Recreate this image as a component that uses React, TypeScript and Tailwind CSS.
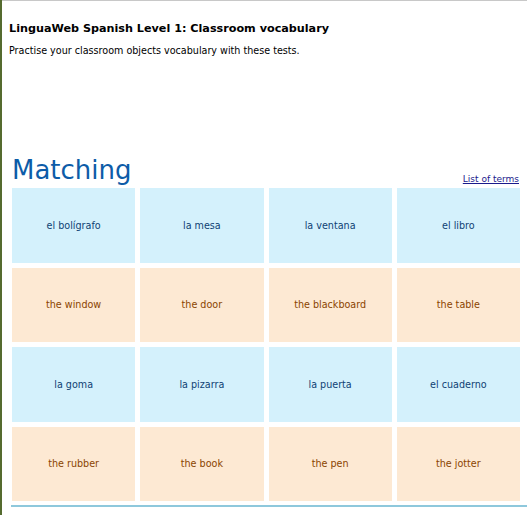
const rows = [
  { kind: "es", words: ["el bolígrafo", "la mesa", "la ventana", "el libro"] },
  { kind: "en", words: ["the window", "the door", "the blackboard", "the table"] },
  { kind: "es", words: ["la goma", "la pizarra", "la puerta", "el cuaderno"] },
  { kind: "en", words: ["the rubber", "the book", "the pen", "the jotter"] },
];

export default function App() {
  return (
    <div className="h-[515px] w-[527px] border-l-2 border-[#556b2f] bg-white font-['DejaVu_Sans',sans-serif] text-black">
      <div className="flex h-full flex-col border-t border-[#c8c8c8]">
        <div className="pl-[7px] pt-[21px]">
          <h1 className="text-[11.2px] font-bold leading-[14px]">LinguaWeb Spanish Level 1: Classroom vocabulary</h1>
          <p className="mt-[8px] text-[9.6px] leading-[13px]">Practise your classroom objects vocabulary with these tests.</p>
        </div>

        <div className="mt-[100px] flex items-end justify-between pl-[10px] pr-[8px]">
          <h2 className="text-[26px] leading-none text-[#0d5ca8]">Matching</h2>
          <a href="#" className="-mb-[2px] text-[9px] leading-[12px] text-[#1a1a8c] underline">List of terms</a>
        </div>

        <div className="mt-[5px] grid grid-cols-4 gap-[5px] pl-[10px] pr-[7px]">
          {rows.map((row, r) =>
            row.words.map((w) => (
              <div
                key={r + w}
                className={
                  row.kind === "es"
                    ? "flex h-[74.5px] items-center justify-center pt-[1px] bg-[#d4f1fc] text-[9.6px] text-[#0f4274]"
                    : "flex h-[74.5px] items-center justify-center pt-[1px] bg-[#fde9d3] text-[9.6px] text-[#8a4400]"
                }
              >
                {w}
              </div>
            ))
          )}
        </div>

        <div className="ml-[9px] mt-[4px] border-t-2 border-[#8ec8dc]" />
      </div>
    </div>
  );
}
